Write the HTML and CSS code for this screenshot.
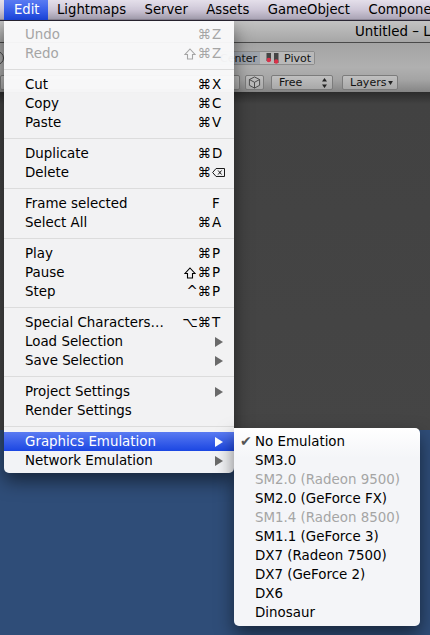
FILE: index.html
```html
<!DOCTYPE html>
<html lang="en">
<head>
  <meta charset="UTF-8" />
  <title>Graphics Emulation menu</title>
  <link rel="stylesheet" href="styles.css">
</head>
<body>
  <nav class="menubar">
    <span class="menubar-item active">Edit</span>
    <span class="menubar-item">Lightmaps</span>
    <span class="menubar-item">Server</span>
    <span class="menubar-item">Assets</span>
    <span class="menubar-item">GameObject</span>
    <span class="menubar-item">Component</span>
  </nav>

  <div class="window">
    <div class="titlebar">Untitled – Lightmaps</div>
    <div class="toolbar">
      <div class="tool-row first">
        <span class="orb"></span>
        <div class="seg">
          <span class="seg-item">Center</span>
          <span class="seg-item on">
            <svg class="pivot-icon" width="13" height="12" viewBox="0 0 13 12">
              <rect x="0.500" y="1" width="4.500" height="8" fill="#444"/>
              <rect x="8" y="1" width="4.500" height="10" fill="#444"/>
              <circle cx="2.800" cy="8" r="2.200" fill="#d8324a"/>
              <circle cx="10.200" cy="9.500" r="2.200" fill="#d8324a"/>
            </svg>
            Pivot
          </span>
        </div>
      </div>
      <div class="tool-row second">
        <span class="btn wide"></span>
        <span class="btn cube">
          <svg width="13" height="13" viewBox="0 0 14 14" fill="#bbb" stroke="#444" stroke-width="1">
            <path d="M7 1 12.500 3.800V10L7 13 1.500 10V3.800Z"/>
            <path d="M1.500 3.800 7 6.800 12.500 3.800M7 6.800V13" fill="none"/>
          </svg>
        </span>
        <span class="btn free">Free
          <svg width="5" height="12" viewBox="0 0 5 12"><path d="M2.500 1 5 4.500H0ZM2.500 11 0 7.500H5Z" fill="#222"/></svg>
        </span>
        <span class="btn layers">Layers
          <svg width="5" height="4" viewBox="0 0 6 5"><path d="M0 0H6L3 5Z" fill="#222"/></svg>
        </span>
      </div>
    </div>
    <div class="scene"></div>
  </div>

  <div class="desktop"></div>

  <ul class="menu edit-menu">
    <li class="row off"><span>Undo</span><span class="keys"><i>⌘</i><b>Z</b></span></li>
    <li class="row off"><span>Redo</span><span class="keys"><i><svg class="shift" width="12" height="12" viewBox="0 0 12 12"><path d="M6 1 11 6.500H8.500V11H3.500V6.500H1Z"/></svg>⌘</i><b>Z</b></span></li>
    <li class="sep"></li>
    <li class="row"><span>Cut</span><span class="keys"><i>⌘</i><b>X</b></span></li>
    <li class="row"><span>Copy</span><span class="keys"><i>⌘</i><b>C</b></span></li>
    <li class="row"><span>Paste</span><span class="keys"><i>⌘</i><b>V</b></span></li>
    <li class="sep"></li>
    <li class="row"><span>Duplicate</span><span class="keys"><i>⌘</i><b>D</b></span></li>
    <li class="row"><span>Delete</span><span class="keys"><i>⌘</i><b>
      <svg class="del" width="15" height="11" viewBox="0 0 16 11" fill="none" stroke="#111" stroke-width="1.200"><path d="M5 .6H15.400V10.400H5L.8 5.500Z"/><path d="M7.500 3 11.800 8M11.800 3 7.500 8"/></svg>
    </b></span></li>
    <li class="sep"></li>
    <li class="row"><span>Frame selected</span><span class="keys"><i></i><b>F</b></span></li>
    <li class="row"><span>Select All</span><span class="keys"><i>⌘</i><b>A</b></span></li>
    <li class="sep"></li>
    <li class="row"><span>Play</span><span class="keys"><i>⌘</i><b>P</b></span></li>
    <li class="row"><span>Pause</span><span class="keys"><i><svg class="shift" width="12" height="12" viewBox="0 0 12 12"><path d="M6 1 11 6.500H8.500V11H3.500V6.500H1Z"/></svg>⌘</i><b>P</b></span></li>
    <li class="row"><span>Step</span><span class="keys"><i>^⌘</i><b>P</b></span></li>
    <li class="sep"></li>
    <li class="row"><span>Special Characters…</span><span class="keys"><i>⌥⌘</i><b>T</b></span></li>
    <li class="row sub"><span>Load Selection</span></li>
    <li class="row sub"><span>Save Selection</span></li>
    <li class="sep"></li>
    <li class="row sub"><span>Project Settings</span></li>
    <li class="row"><span>Render Settings</span></li>
    <li class="sep"></li>
    <li class="row sub selected"><span>Graphics Emulation</span></li>
    <li class="row sub"><span>Network Emulation</span></li>
  </ul>

  <ul class="menu emu-menu">
    <li class="row checked"><span>No Emulation</span></li>
    <li class="row"><span>SM3.0</span></li>
    <li class="row off"><span>SM2.0 (Radeon 9500)</span></li>
    <li class="row"><span>SM2.0 (GeForce FX)</span></li>
    <li class="row off"><span>SM1.4 (Radeon 8500)</span></li>
    <li class="row"><span>SM1.1 (GeForce 3)</span></li>
    <li class="row"><span>DX7 (Radeon 7500)</span></li>
    <li class="row"><span>DX7 (GeForce 2)</span></li>
    <li class="row"><span>DX6</span></li>
    <li class="row"><span>Dinosaur</span></li>
  </ul>
</body>
</html>
```

FILE: styles.css
```css
* {
  box-sizing: border-box;
}

html, body {
  height: 100%;
}

body {
  margin: 0;
  height: 635px;
  overflow: hidden;
  display: flex;
  flex-direction: column;
  background: #2f4d78;
  font-family: "DejaVu Sans", sans-serif;
  font-size: 13.4px;
  color: #000;
}

.menubar {
  height: 21px;
  flex: none;
  display: flex;
  padding-left: 4px;
  gap: 18.5px;
  background: linear-gradient(180deg, #e4dfea, #cfc8d8 45%, #a9a3b4 92%, #2a2633 96%);
  white-space: nowrap;
  overflow: hidden;
  font-size: 13.2px;
}

.menubar-item {
  flex: none;
  height: 20px;
  line-height: 20px;
}

.menubar-item.active {
  width: 44px;
  margin-right: -9.5px;
  padding-left: 10px;
  color: #fff;
  background: linear-gradient(180deg, #5a7bf2, #1b46e2);
}

.window {
  height: 409px;
  flex: none;
  display: flex;
  flex-direction: column;
}

.titlebar {
  height: 22px;
  flex: none;
  line-height: 22px;
  padding-left: 355px;
  white-space: nowrap;
  overflow: hidden;
  background: linear-gradient(180deg, #c2c2c2, #a6a6a6);
  border-bottom: 1px solid #4a4a4a;
}

.toolbar {
  height: 49px;
  flex: none;
  display: flex;
  flex-direction: column;
  font-size: 11px;
  color: #111;
  background: linear-gradient(180deg, #a4a4a4, #b0b0b0 50%, #a4a4a4 75%, #858585);
}

.tool-row {
  display: flex;
  white-space: nowrap;
}

.tool-row.first {
  padding-top: 8px;
  height: 32px;
}

.tool-row.second {
  height: 15px;
}

.orb {
  width: 14px;
  height: 14px;
  margin-left: -10px;
  margin-right: 195px;
  border: 1px solid #444;
  border-radius: 50%;
}

.seg {
  height: 14px;
  display: flex;
  border: 1px solid #8c8c8c;
  border-radius: 2px;
}

.seg-item {
  display: flex;
  align-items: center;
  gap: 5px;
  padding: 0 4px 0 6px;
  width: 54px;
  background: #b9b9b9;
}

.seg-item:first-child {
  width: 60px;
  justify-content: flex-end;
  padding: 0 3px 0 0;
  background: #9ea4ac;
}

.pivot-icon {
  flex: none;
}

.btn {
  flex: none;
  height: 15px;
  display: flex;
  align-items: center;
  justify-content: space-between;
  padding: 0 5px 0 7px;
  background: linear-gradient(180deg, #c0c0c0, #a8a8a8);
  border: 1px solid #7c7c7c;
  border-radius: 2px;
}

.btn.wide {
  width: 240px;
  margin-right: 5px;
}

.btn.cube {
  width: 19px;
  padding: 0 2px;
  margin-right: 7px;
}

.btn.free {
  width: 62px;
  margin-right: 9px;
}

.btn.layers {
  width: 56px;
  padding-right: 4px;
}

.scene {
  flex: 1;
  background: linear-gradient(180deg, #2c2c2c, #424242 12px, #454545);
}

.desktop {
  flex: 1;
}

.menu {
  position: absolute;
  margin: 0;
  padding: 0;
  list-style: none;
  background: rgba(250, 250, 251, 0.96);
  box-shadow: 0 8px 18px rgba(0, 0, 0, 0.5);
}

.edit-menu {
  left: 4px;
  top: 21px;
  width: 230px;
  padding: 4px 0 3px;
  border-radius: 0 0 5px 5px;
}

.emu-menu {
  left: 234px;
  top: 428px;
  width: 186px;
  padding: 4px 0;
  border-radius: 0 5px 5px 5px;
  background: linear-gradient(180deg, #ffffff, #f4f5f8 30px);
}

.row {
  height: 19px;
  line-height: 19px;
  padding: 0 10px 0 21px;
  display: flex;
  justify-content: space-between;
  white-space: nowrap;
  position: relative;
}

.sep {
  height: 12px;
  display: flex;
  align-items: center;
}

.sep::before {
  content: "";
  flex: 1;
  height: 1px;
  background: #dcdcdc;
}

.off {
  color: #a5a5a5;
}

.keys {
  display: flex;
  margin-right: -1px;
}

.keys i {
  font-style: normal;
  text-align: right;
  display: flex;
  align-items: center;
}

.keys b {
  font-weight: normal;
  width: 14px;
  padding-left: 1px;
  display: flex;
  align-items: center;
}

.shift {
  margin-right: 2px;
  fill: none;
  stroke: currentColor;
  stroke-width: 1.100;
}

.sub::after {
  content: "";
  position: absolute;
  right: 11px;
  top: 5px;
  border-left: 8px solid #6a6a6a;
  border-top: 5px solid transparent;
  border-bottom: 5px solid transparent;
}

.selected {
  color: #fff;
  background: linear-gradient(180deg, #5a7bf2, #1b46e2);
}

.selected::after {
  border-left-color: #fff;
}

.checked::before {
  content: "✔";
  position: absolute;
  left: 6px;
  font-size: 14px;
  color: #555;
}
```
